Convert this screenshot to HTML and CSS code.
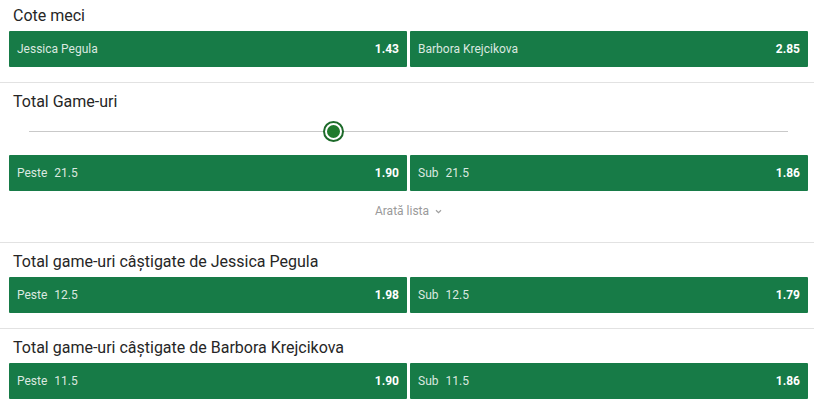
FILE: index.html
```html
<!DOCTYPE html>
<html lang="ro">
<head>
    <meta charset="UTF-8">
    <meta name="viewport" content="width=device-width, initial-scale=1.0">
    <title>Cote meci</title>
    <link rel="stylesheet" href="styles.css">
</head>
<body>
    <div class="market first">
        <h2 class="market-title">Cote meci</h2>
        <div class="odds-row">
            <button class="odd"><span class="label">Jessica Pegula</span><span class="price">1.43</span></button>
            <button class="odd"><span class="label">Barbora Krejcikova</span><span class="price">2.85</span></button>
        </div>
    </div>

    <div class="market">
        <h2 class="market-title">Total Game-uri</h2>
        <div class="slider">
            <div class="track"></div>
            <div class="thumb" style="left: 40%"></div>
        </div>
        <div class="odds-row">
            <button class="odd"><span class="label">Peste<span class="line">21.5</span></span><span class="price">1.90</span></button>
            <button class="odd"><span class="label">Sub<span class="line">21.5</span></span><span class="price">1.86</span></button>
        </div>
        <div class="more">
            Arată lista
            <svg class="caret" width="7" height="5" viewBox="0 0 7 5"><path d="M1 1.2 L3.5 3.6 L6 1.2" fill="none" stroke="#a0a0a0" stroke-width="1.2"/></svg>
        </div>
    </div>

    <div class="market">
        <h2 class="market-title">Total game-uri câștigate de Jessica Pegula</h2>
        <div class="odds-row">
            <button class="odd"><span class="label">Peste<span class="line">12.5</span></span><span class="price">1.98</span></button>
            <button class="odd"><span class="label">Sub<span class="line">12.5</span></span><span class="price">1.79</span></button>
        </div>
    </div>

    <div class="market">
        <h2 class="market-title">Total game-uri câștigate de Barbora Krejcikova</h2>
        <div class="odds-row">
            <button class="odd"><span class="label">Peste<span class="line">11.5</span></span><span class="price">1.90</span></button>
            <button class="odd"><span class="label">Sub<span class="line">11.5</span></span><span class="price">1.86</span></button>
        </div>
    </div>
</body>
</html>
```

FILE: styles.css
```css
body {
    margin: 0;
    font-family: Roboto, "Liberation Sans", sans-serif;
    background: #fff;
    color: #222;
}
.market {
    padding: 9px 6px 15px 9px;
    border-bottom: 1px solid #e2e2e2;
}
.market.first {
    padding-top: 6px;
}
.market-title {
    margin: 0 0 5px 4px;
    font-size: 16px;
    font-weight: 400;
    line-height: 20px;
    color: #262626;
}
.odds-row {
    display: grid;
    grid-template-columns: 1fr 1fr;
    gap: 3px;
}
.odd {
    display: flex;
    align-items: center;
    justify-content: space-between;
    height: 36px;
    padding: 0 8px;
    border: 0;
    border-radius: 1px;
    background: #177b47;
    font-family: inherit;
    font-size: 12px;
    color: #fff;
}
.label {
    color: rgba(255, 255, 255, 0.85);
}
.line {
    margin-left: 7px;
}
.price {
    font-weight: 700;
}
.slider {
    position: relative;
    margin: 0 20px;
    padding: 4px 0 13px;
}
.track {
    height: 21px;
    background: linear-gradient(#c9c9c9, #c9c9c9) center / 100% 1px no-repeat;
}
.thumb {
    position: absolute;
    top: 6px;
    width: 13px;
    height: 13px;
    margin-left: -8px;
    border: 2px solid #fff;
    border-radius: 50%;
    background: #1f7a2c;
    box-shadow: 0 0 0 2px #1d6a2a;
}
.more {
    padding: 10px 0 6px;
    line-height: 20px;
    text-align: center;
    font-size: 12px;
    color: #9a9a9a;
}
.caret {
    margin-left: 3px;
    vertical-align: middle;
}
```
